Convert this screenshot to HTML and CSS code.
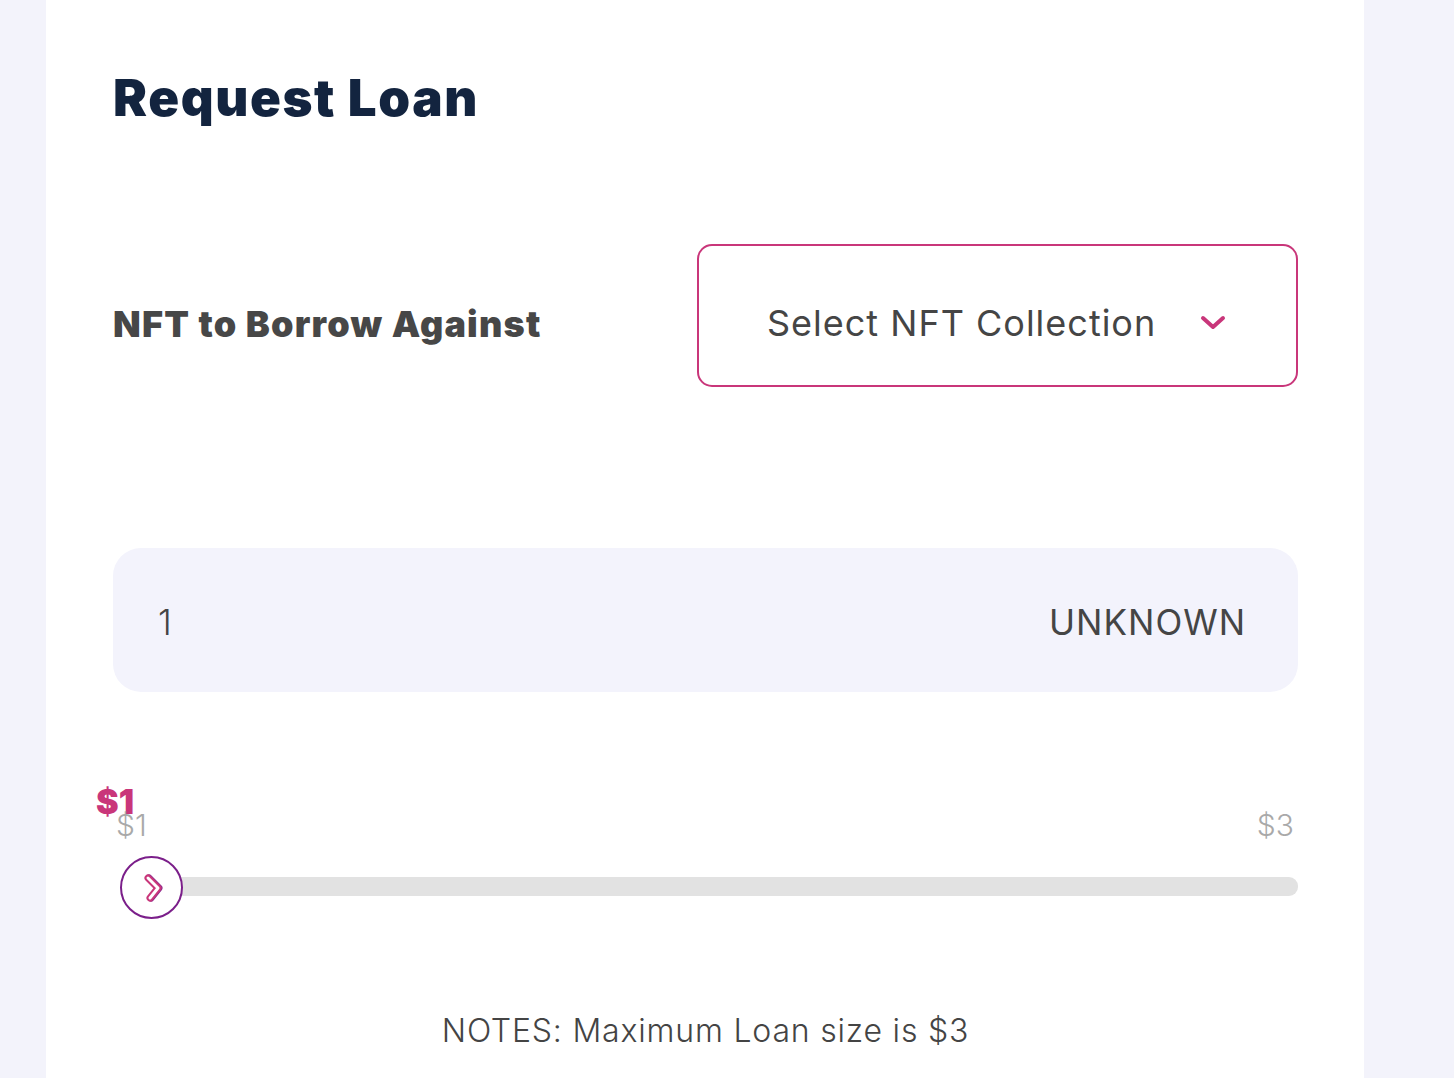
FILE: index.html
```html
<!DOCTYPE html>
<html lang="en">
<head>
<meta charset="utf-8">
<title>Request Loan</title>
<link rel="stylesheet" href="styles.css">
</head>
<body>
<main class="card">
  <h1 class="title">Request Loan</h1>
  <div class="nft-row">
    <div class="label">NFT to Borrow Against</div>
    <button class="select">
      <span class="select-text">Select NFT Collection</span>
      <svg class="chev" width="26" height="16" viewBox="0 0 26 16"><path d="M3 3 L13 12 L23 3" fill="none" stroke="#c9367a" stroke-width="4" stroke-linecap="round" stroke-linejoin="round"/></svg>
    </button>
  </div>
  <div class="amount">
    <span class="amount-val">1</span>
    <span class="amount-unit">UNKNOWN</span>
  </div>
  <div class="slider">
    <div class="slider-current">$1</div>
    <div class="slider-labels">
      <span class="min">$1</span>
      <span class="max">$3</span>
    </div>
    <div class="track-wrap">
      <div class="track"></div>
      <div class="thumb">
        <svg width="30" height="30" viewBox="0 0 30 30">
          <path d="M11 5 L21 15 L13 25" fill="none" stroke="#8a2a8e" stroke-width="7" stroke-linecap="round" stroke-linejoin="round" transform="translate(1,0)"/>
          <path d="M11 5 L21 15 L13 25" fill="none" stroke="#c9367a" stroke-width="7" stroke-linecap="round" stroke-linejoin="round"/>
          <path d="M11 5 L21 15 L13 25" fill="none" stroke="#fff" stroke-width="3" stroke-linecap="round" stroke-linejoin="round"/>
        </svg>
      </div>
    </div>
  </div>
  <p class="notes">NOTES: Maximum Loan size is $3</p>
</main>
</body>
</html>
```

FILE: styles.css
```css
html, body {
  margin: 0;
  padding: 0;
}
body {
  background: #f3f3fb;
  font-family: Inter, "Noto Sans", sans-serif;
  color: #444;
  height: 1078px;
  overflow: hidden;
}
.card {
  box-sizing: border-box;
  margin-left: 46px;
  width: 1318px;
  min-height: 1078px;
  background: #fff;
  padding: 68px 66px 0 67px;
}
.title {
  margin: 0;
  font-size: 51px;
  font-weight: 900;
  color: #13243f;
  letter-spacing: 1.6px;
  line-height: 60px;
}
.nft-row {
  display: flex;
  align-items: center;
  justify-content: space-between;
  margin-top: 116px;
}
.label {
  font-size: 36px;
  font-weight: 900;
  color: #474747;
  letter-spacing: 1.2px;
  padding-top: 16px;
}
.select {
  box-sizing: border-box;
  width: 601px;
  height: 143px;
  border: 2px solid #c9367a;
  border-radius: 15px;
  background: #fff;
  display: flex;
  align-items: center;
  padding: 14px 70px 0 68px;
  justify-content: space-between;
  font-family: Inter, "Noto Sans", sans-serif;
  cursor: pointer;
}
.select-text {
  font-size: 36px;
  color: #454545;
  font-weight: 400;
  letter-spacing: 1px;
}
.chev {
  display: block;
}
.amount {
  margin-top: 161px;
  height: 144px;
  border-radius: 28px;
  background: #f3f3fc;
  display: flex;
  align-items: center;
  justify-content: space-between;
  padding: 4px 52px 0 45px;
  box-sizing: border-box;
  font-size: 35px;
  color: #454545;
}
.amount-val {
  font-weight: 300;
}
.amount-unit {
  font-weight: 400;
  letter-spacing: 1px;
}
.slider {
  margin-top: 90px;
  position: relative;
}
.slider-current {
  font-size: 34px;
  font-weight: 900;
  color: #c9367a;
  line-height: 40px;
  margin-left: -17px;
}
.slider-labels {
  display: flex;
  justify-content: space-between;
  font-size: 30px;
  font-weight: 300;
  color: #a9a9a9;
  line-height: 36px;
  margin-top: -15px;
  padding: 0 4px 0 3px;
}
.track-wrap {
  position: relative;
  margin-top: 34px;
  height: 19px;
}
.track {
  margin-left: 38px;
  height: 19px;
  background: #e2e2e2;
  border-radius: 9px;
}
.thumb {
  position: absolute;
  left: 7px;
  top: -21px;
  width: 63px;
  height: 63px;
  box-sizing: border-box;
  border: 2px solid #7b1f8a;
  border-radius: 50%;
  background: #fff;
  display: flex;
  align-items: center;
  justify-content: center;
}
.thumb svg {
  display: block;
}
.notes {
  margin: 115px 0 0 0;
  text-align: center;
  font-size: 32px;
  font-weight: 300;
  color: #444;
  letter-spacing: 0.8px;
}
```
